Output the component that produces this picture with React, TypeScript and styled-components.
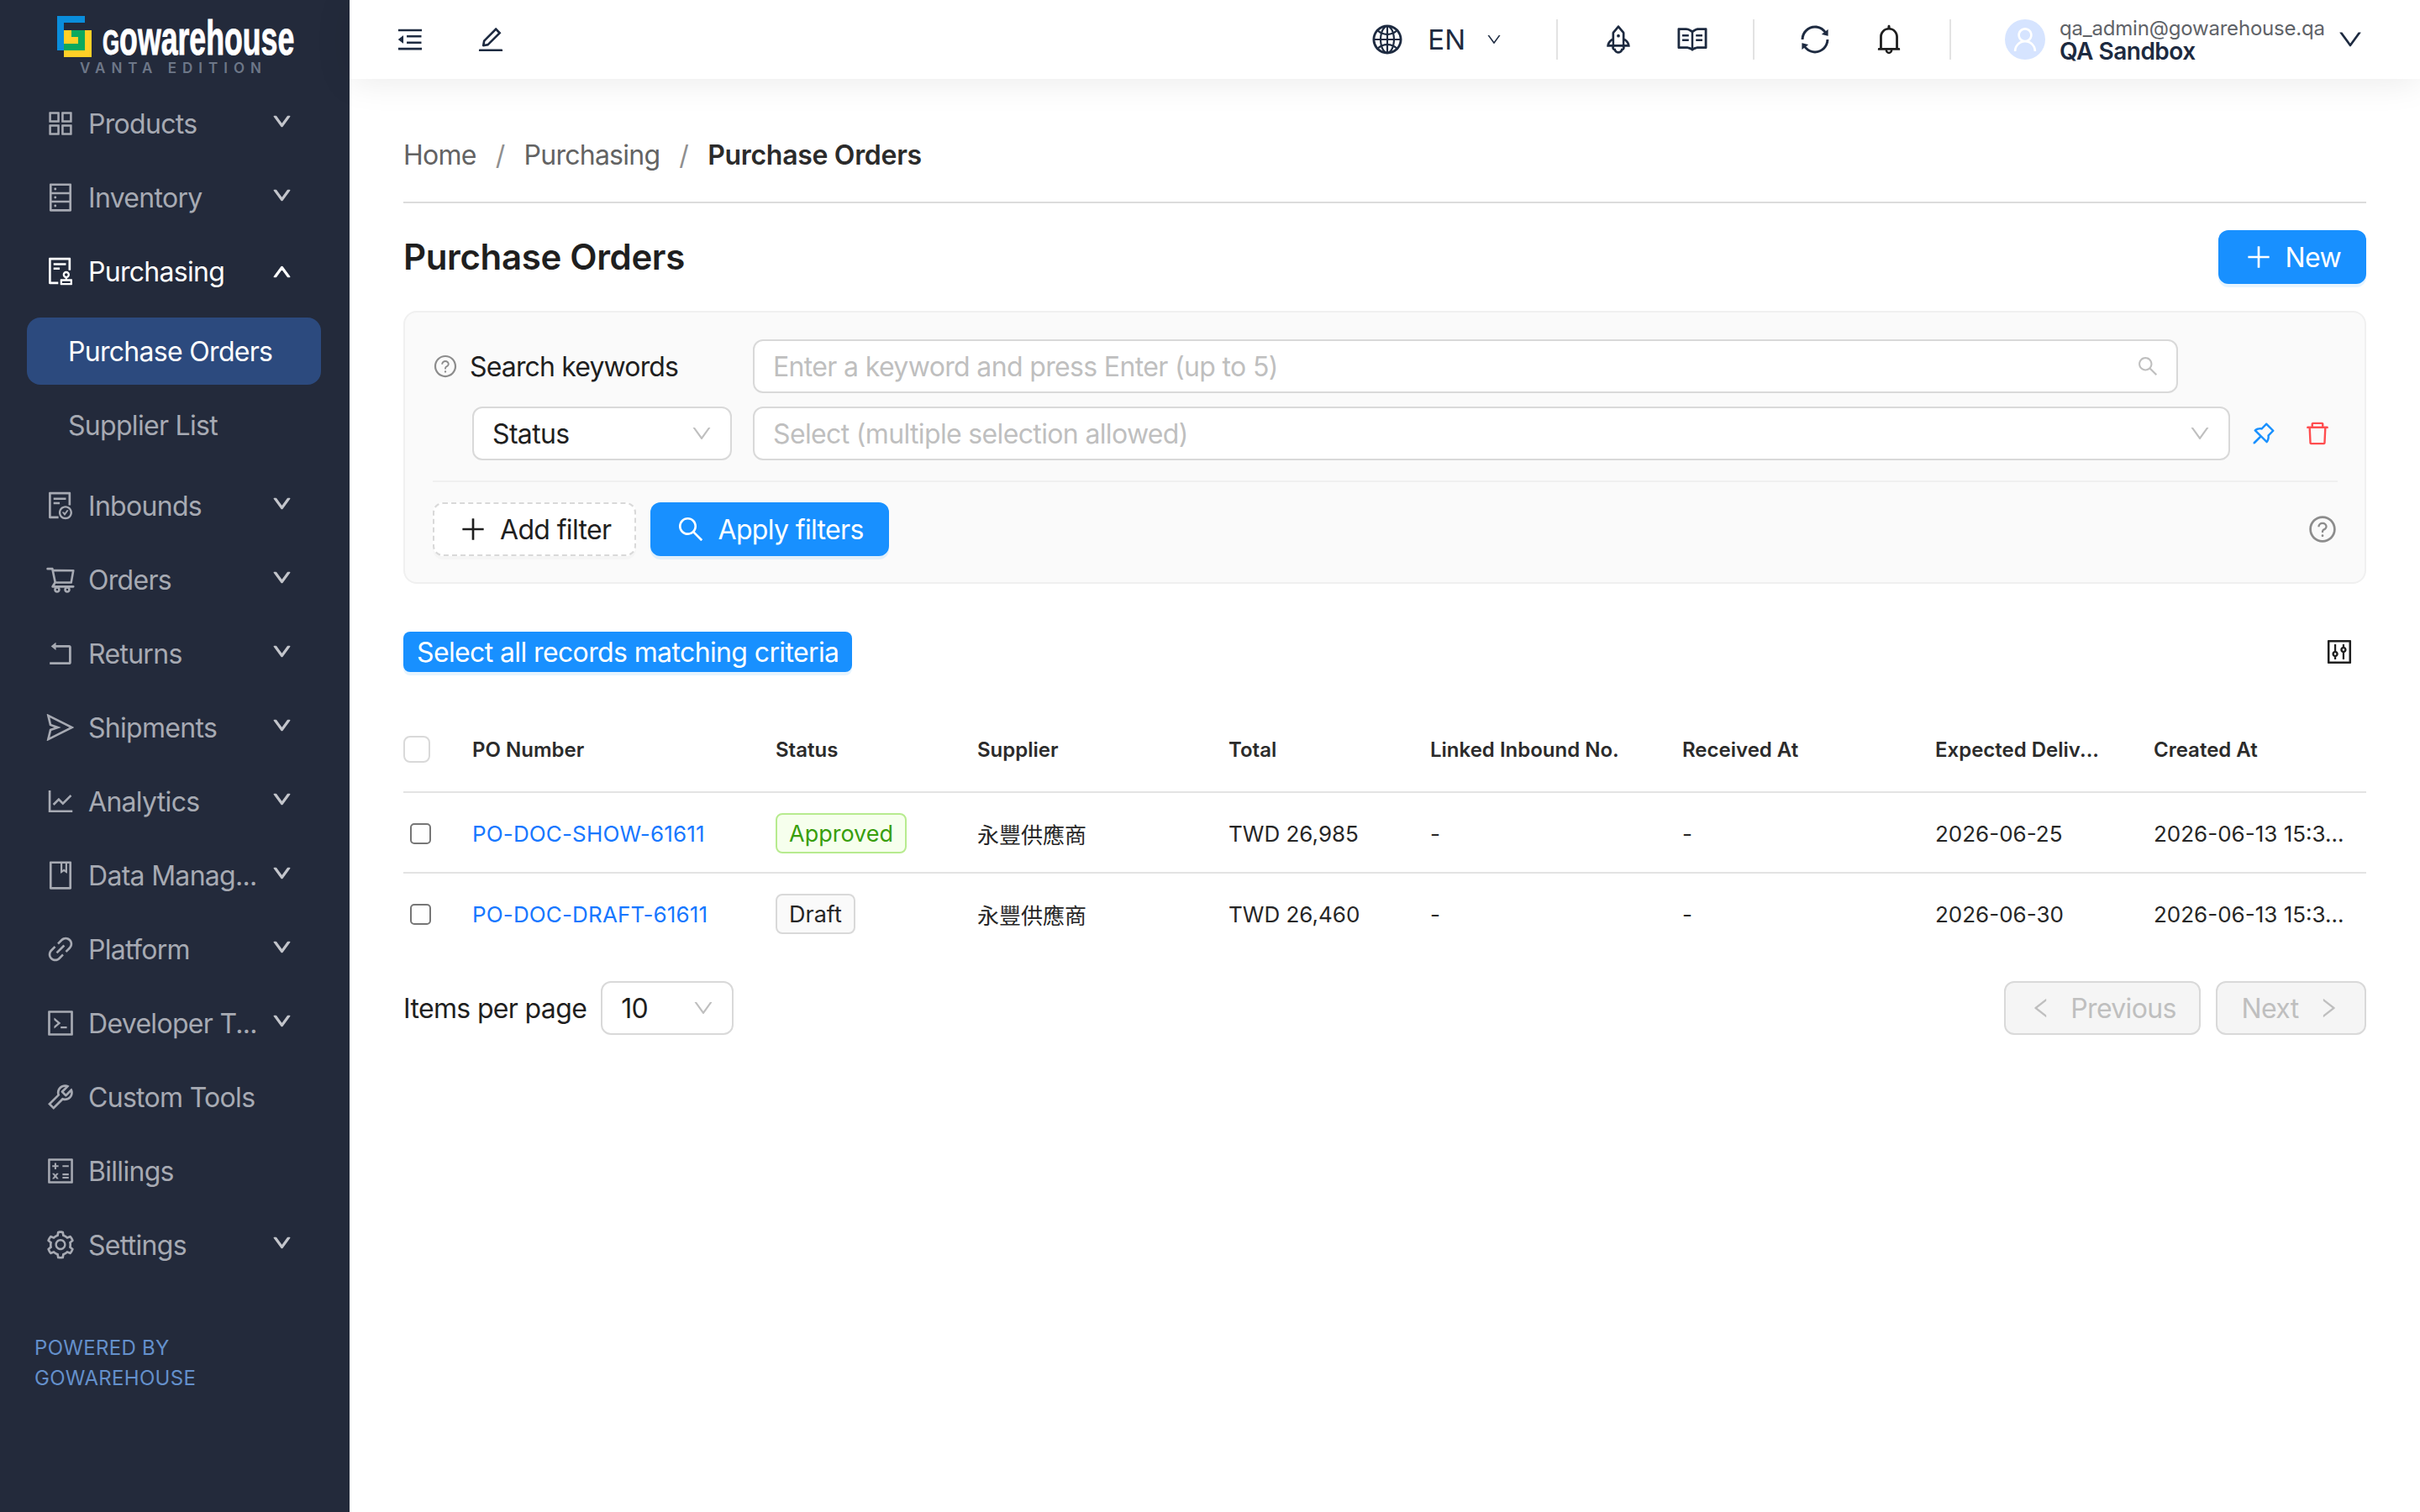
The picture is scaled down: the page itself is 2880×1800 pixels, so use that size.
import styled, { createGlobalStyle } from "styled-components"
import { ReactNode } from "react"
import {
  AiOutlineAppstore,
  AiOutlineDatabase,
  AiOutlineAudit,
  AiOutlineFileDone,
  AiOutlineShoppingCart,
  AiOutlineRollback,
  AiOutlineSend,
  AiOutlineLineChart,
  AiOutlineBook,
  AiOutlineLink,
  AiOutlineCode,
  AiOutlineTool,
  AiOutlineCalculator,
  AiOutlineSetting,
  AiOutlineDown,
  AiOutlineUp,
  AiOutlineMenuFold,
  AiOutlineEdit,
  AiOutlineGlobal,
  AiOutlineRocket,
  AiOutlineRead,
  AiOutlineSync,
  AiOutlineBell,
  AiOutlineUser,
  AiOutlinePlus,
  AiOutlineSearch,
  AiOutlinePushpin,
  AiOutlineDelete,
  AiOutlineQuestionCircle,
  AiOutlineControl,
  AiOutlineLeft,
  AiOutlineRight,
} from "react-icons/ai"

const GlobalStyle = createGlobalStyle`
  * {
    box-sizing: border-box;
  }
  body {
    margin: 0;
    background: #ffffff;
    font-family: Inter, "Noto Sans CJK TC", sans-serif;
  }
  svg {
    flex-shrink: 0;
  }
`

const Page = styled.div`
  display: flex;
  width: 2880px;
  height: 1800px;
  overflow: hidden;
`

const Sidebar = styled.aside`
  width: 416px;
  flex-shrink: 0;
  background: #232a3b;
  display: flex;
  flex-direction: column;
`

const LogoBlock = styled.div`
  height: 107px;
  padding: 19px 0 0 68px;
  display: flex;
  flex-direction: column;
  position: relative;
`

const LogoRow = styled.div`
  display: flex;
  align-items: flex-start;
  gap: 13px;
`

const LogoText = styled.span`
  display: block;
  width: 226px;
  font-family: "Liberation Sans", sans-serif;
  font-weight: 700;
  font-size: 58px;
  line-height: 50px;
  margin-top: 1px;
  color: #ffffff;
  -webkit-text-stroke: 1px #ffffff;
  transform-origin: left top;
  transform: scaleX(0.615);
  white-space: nowrap;
  &::first-letter {
    text-transform: uppercase;
    font-size: 42px;
  }
`

const LogoSub = styled.span`
  position: absolute;
  left: 95px;
  top: 72px;
  font-size: 17px;
  line-height: 18px;
  font-weight: 600;
  letter-spacing: 7px;
  color: #6d7788;
  white-space: nowrap;
`

const NavList = styled.nav`
  display: flex;
  flex-direction: column;
  gap: 8px;
`

const NavRow = styled.div<{ $active?: boolean }>`
  height: 80px;
  display: flex;
  align-items: center;
  padding: 0 71px 0 53px;
  color: ${p => (p.$active ? "#ffffff" : "#a7aab3")};
  font-size: 32px;
  letter-spacing: -0.7px;
`

const NavIcon = styled.span`
  width: 38px;
  height: 38px;
  display: flex;
  font-size: 38px;
  margin-right: 14px;
  flex-shrink: 0;
`

const NavLabel = styled.span`
  flex: 1;
  white-space: nowrap;
`

const NavCaret = styled.span<{ $up?: boolean }>`
  width: 20px;
  flex-shrink: 0;
  display: flex;
  justify-content: center;
  font-size: 25px;
  position: relative;
  top: ${p => (p.$up ? 0 : -3)}px;
  color: ${p => (p.$up ? "#ffffff" : "#c4c6cc")};
  svg {
    stroke: currentColor;
    stroke-width: 50;
  }
`

const SubList = styled.div`
  display: flex;
  flex-direction: column;
  gap: 8px;
  margin: 15px 0 16px;
`

const SubRow = styled.div<{ $active?: boolean }>`
  height: 80px;
  margin: 0 34px 0 32px;
  padding-left: 49px;
  display: flex;
  align-items: center;
  border-radius: 16px;
  background: ${p => (p.$active ? "#2c4a7e" : "transparent")};
  color: ${p => (p.$active ? "#ffffff" : "#a7aab3")};
  font-size: 32px;
  letter-spacing: -0.7px;
`

const Powered = styled.div`
  margin: 65px 0 0 41px;
  font-size: 24px;
  line-height: 36px;
  letter-spacing: 0.3px;
  color: #6490cb;
`

const Main = styled.main`
  flex: 1;
  min-width: 0;
  display: flex;
  flex-direction: column;
`

const TopBar = styled.header`
  height: 94px;
  flex-shrink: 0;
  display: flex;
  align-items: center;
  padding: 0 66px 0 54px;
  background: #ffffff;
  box-shadow: 0 2px 44px rgba(0, 0, 0, 0.09);
  position: relative;
  color: #1d2a40;
`

const TopIcon = styled.span<{ $size?: number; $left?: number; $right?: number; $color?: string }>`
  display: flex;
  font-size: ${p => p.$size ?? 36}px;
  margin-left: ${p => p.$left ?? 0}px;
  margin-right: ${p => p.$right ?? 0}px;
  color: ${p => p.$color ?? "inherit"};
`

const Spacer = styled.div`
  flex: 1;
`

const LangText = styled.span`
  font-size: 33px;
  margin: 0 24px 0 28px;
`

const TopDivider = styled.span`
  width: 2px;
  height: 48px;
  background: #e3e3e3;
`

const Avatar = styled.span`
  width: 48px;
  height: 48px;
  border-radius: 50%;
  background: #d6e4ff;
  color: #ffffff;
  display: flex;
  align-items: center;
  justify-content: center;
  font-size: 36px;
  margin: 0 17px 0 64px;
`

const UserBlock = styled.div`
  display: flex;
  flex-direction: column;
  width: 329px;
  padding-top: 2px;
`

const UserEmail = styled.span`
  font-size: 24px;
  line-height: 26px;
  letter-spacing: -0.2px;
  color: #5f6368;
`

const UserName = styled.span`
  font-size: 28px;
  line-height: 28px;
  font-weight: 600;
  letter-spacing: -0.5px;
  color: #1d2a40;
`

const Content = styled.div`
  padding: 0 64px;
  display: flex;
  flex-direction: column;
  letter-spacing: -0.65px;
`

const Breadcrumb = styled.div`
  height: 148px;
  padding-top: 66px;
  border-bottom: 2px solid #dcdcdc;
  display: flex;
  align-items: flex-start;
  font-size: 32px;
  line-height: 50px;
`

const Crumb = styled.span<{ $current?: boolean }>`
  color: ${p => (p.$current ? "#2b2b2b" : "#636363")};
  font-weight: ${p => (p.$current ? 600 : 400)};
  letter-spacing: ${p => (p.$current ? -0.3 : -0.75)}px;
`

const CrumbSep = styled.span`
  color: #8f8f8f;
  margin: 0 23px;
`

const TitleRow = styled.div`
  display: flex;
  align-items: center;
  justify-content: space-between;
  margin-top: 32px;
`

const Title = styled.h1`
  margin: 0;
  font-size: 42px;
  line-height: 64px;
  font-weight: 600;
  letter-spacing: -0.35px;
  color: #1f1f1f;
`

const Button = styled.button<{ $primary?: boolean; $dashed?: boolean }>`
  height: 64px;
  display: inline-flex;
  align-items: center;
  border-radius: 12px;
  font-family: inherit;
  font-size: 32px;
  letter-spacing: -0.65px;
  padding: 0 ${p => (p.$primary ? 30 : 28)}px;
  border: ${p => (p.$primary ? "none" : p.$dashed ? "2px dashed #d9d9d9" : "2px solid #d9d9d9")};
  background: ${p => (p.$primary ? "#1890ff" : "#ffffff")};
  color: ${p => (p.$primary ? "#ffffff" : "#1f1f1f")};
  box-shadow: ${p => (p.$primary ? "0 4px 0 rgba(5, 145, 255, 0.1)" : "0 4px 0 rgba(0, 0, 0, 0.02)")};
`

const ButtonIcon = styled.span`
  display: flex;
  font-size: 36px;
  margin-right: 14px;
`

const FilterPanel = styled.section`
  margin-top: 32px;
  height: 325px;
  background: #fafafa;
  border: 2px solid #f0f0f0;
  border-radius: 16px;
  padding: 32px 32px 0 33px;
  display: flex;
  flex-direction: column;
`

const FilterRow = styled.div`
  display: flex;
  align-items: center;
  height: 64px;
`

const SecondRow = styled(FilterRow)`
  margin-top: 16px;
  padding-left: 47px;
`

const Help = styled.span<{ $size: number }>`
  display: flex;
  color: #8c8c8c;
  font-size: ${p => p.$size}px;
`

const SearchLabel = styled.span`
  width: 351px;
  padding-left: 14px;
  font-size: 32px;
  letter-spacing: -0.85px;
  color: #1f1f1f;
`

const Field = styled.div<{ $w: number; $left?: number }>`
  width: ${p => p.$w}px;
  height: 64px;
  margin-left: ${p => p.$left ?? 0}px;
  background: #ffffff;
  border: 2px solid #d9d9d9;
  border-radius: 12px;
  padding: 0 20px 0 22px;
  display: flex;
  align-items: center;
  justify-content: space-between;
  font-size: 32px;
  flex-shrink: 0;
`

const FieldText = styled.span<{ $placeholder?: boolean }>`
  color: ${p => (p.$placeholder ? "#bfbfbf" : "#1f1f1f")};
`

const FieldIcon = styled.span`
  display: flex;
  font-size: 28px;
  color: #bfbfbf;
`

const RowAction = styled.span<{ $color: string; $left: number }>`
  display: flex;
  font-size: 34px;
  color: ${p => p.$color};
  margin-left: ${p => p.$left}px;
`

const PanelDivider = styled.div`
  height: 2px;
  background: #f0f0f0;
  margin-top: 24px;
`

const ActionsRow = styled.div`
  display: flex;
  align-items: center;
  gap: 17px;
  margin-top: 24px;
`

const SelectAll = styled.button`
  height: 48px;
  padding: 0 16px;
  border: none;
  border-radius: 8px;
  background: #1890ff;
  box-shadow: 0 4px 0 rgba(5, 145, 255, 0.1);
  color: #ffffff;
  font-family: inherit;
  font-size: 32px;
  letter-spacing: -0.62px;
`

const BulkRow = styled.div`
  margin-top: 57px;
  padding-right: 14px;
  display: flex;
  align-items: center;
  justify-content: space-between;
  color: #1f1f1f;
`

const COLUMNS = "82px 361px 240px 299px 240px 300px 301px 260px 253px"

const TableHead = styled.div`
  margin-top: 60px;
  height: 84px;
  padding-bottom: 18px;
  display: grid;
  grid-template-columns: ${COLUMNS};
  align-items: center;
  border-bottom: 2px solid #e3e3e3;
  font-size: 24px;
  font-weight: 600;
  letter-spacing: 0;
  color: #2b2b2b;
`

const TableRow = styled.div<{ $last?: boolean }>`
  height: 96px;
  padding-top: ${p => (p.$last ? 0 : 2)}px;
  display: grid;
  grid-template-columns: ${COLUMNS};
  align-items: center;
  border-bottom: ${p => (p.$last ? "none" : "2px solid #e3e3e3")};
  font-size: 26px;
  letter-spacing: 0;
  color: #262626;
`

const HeadBox = styled.span`
  width: 32px;
  height: 32px;
  border-radius: 8px;
  border: 2px solid #d9d9d9;
  background: #ffffff;
`

const RowBox = styled.span`
  width: 25px;
  height: 25px;
  margin-left: 8px;
  border-radius: 5px;
  border: 2px solid #767676;
  background: #ffffff;
`

const PoLink = styled.a`
  color: #1677ff;
  letter-spacing: 0.15px;
  text-decoration: none;
`

const Tag = styled.span<{ $kind: "green" | "gray" }>`
  justify-self: start;
  height: 48px;
  padding: 0 14px;
  display: inline-flex;
  align-items: center;
  border-radius: 8px;
  font-size: 27px;
  border: 2px solid ${p => (p.$kind === "green" ? "#b7eb8f" : "#d9d9d9")};
  background: ${p => (p.$kind === "green" ? "#f6ffed" : "#fafafa")};
  color: ${p => (p.$kind === "green" ? "#389e0d" : "#262626")};
`

const Pager = styled.div`
  margin-top: 32px;
  display: flex;
  align-items: center;
  justify-content: space-between;
`

const PagerSide = styled.div<{ $gap: number }>`
  display: flex;
  align-items: center;
  gap: ${p => p.$gap}px;
  font-size: 32px;
  color: #1f1f1f;
`

const PagerButton = styled.button<{ $w: number }>`
  width: ${p => p.$w}px;
  height: 64px;
  display: flex;
  align-items: center;
  justify-content: center;
  gap: 20px;
  background: #f5f5f5;
  border: 2px solid #d9d9d9;
  border-radius: 12px;
  color: #bfbfbf;
  font-family: inherit;
  font-size: 32px;
  letter-spacing: -0.65px;
  padding: 0;
  svg {
    font-size: 30px;
  }
`

type NavItem = { label: string; icon: ReactNode; caret?: boolean }

const topItems: NavItem[] = [
  { label: "Products", icon: <AiOutlineAppstore />, caret: true },
  { label: "Inventory", icon: <AiOutlineDatabase />, caret: true },
]

const bottomItems: NavItem[] = [
  { label: "Inbounds", icon: <AiOutlineFileDone />, caret: true },
  { label: "Orders", icon: <AiOutlineShoppingCart />, caret: true },
  { label: "Returns", icon: <AiOutlineRollback />, caret: true },
  { label: "Shipments", icon: <AiOutlineSend />, caret: true },
  { label: "Analytics", icon: <AiOutlineLineChart />, caret: true },
  { label: "Data Manag...", icon: <AiOutlineBook />, caret: true },
  { label: "Platform", icon: <AiOutlineLink />, caret: true },
  { label: "Developer T...", icon: <AiOutlineCode />, caret: true },
  { label: "Custom Tools", icon: <AiOutlineTool /> },
  { label: "Billings", icon: <AiOutlineCalculator /> },
  { label: "Settings", icon: <AiOutlineSetting />, caret: true },
]

const rows = [
  {
    po: "PO-DOC-SHOW-61611",
    status: "Approved",
    kind: "green" as const,
    total: "TWD 26,985",
    expected: "2026-06-25",
  },
  {
    po: "PO-DOC-DRAFT-61611",
    status: "Draft",
    kind: "gray" as const,
    total: "TWD 26,460",
    expected: "2026-06-30",
  },
]

const LogoMark = () => (
  <svg width="41" height="50" viewBox="0 0 41 50">
    <path d="M0 0H33V8H8V41H0Z" fill="#0a8ddb" />
    <rect x="8" y="17" width="33" height="32" fill="#ffd027" />
    <path d="M17 17H33V41H8V33H25V25H17Z" fill="#0aa95e" />
  </svg>
)

const SideNavRow = ({ item }: { item: NavItem }) => (
  <NavRow>
    <NavIcon>{item.icon}</NavIcon>
    <NavLabel>{item.label}</NavLabel>
    {item.caret ? <NavCaret><AiOutlineDown /></NavCaret> : null}
  </NavRow>
)

const App = () => {
  return (
    <Page>
      <GlobalStyle />
      <Sidebar>
        <LogoBlock>
          <LogoRow>
            <LogoMark />
            <LogoText>gowarehouse</LogoText>
          </LogoRow>
          <LogoSub>VANTA EDITION</LogoSub>
        </LogoBlock>
        <NavList>
          {topItems.map(item => <SideNavRow key={item.label} item={item} />)}
          <NavRow $active>
            <NavIcon><AiOutlineAudit /></NavIcon>
            <NavLabel>Purchasing</NavLabel>
            <NavCaret $up><AiOutlineUp /></NavCaret>
          </NavRow>
        </NavList>
        <SubList>
          <SubRow $active>Purchase Orders</SubRow>
          <SubRow>Supplier List</SubRow>
        </SubList>
        <NavList>
          {bottomItems.map(item => <SideNavRow key={item.label} item={item} />)}
        </NavList>
        <Powered>POWERED BY<br />GOWAREHOUSE</Powered>
      </Sidebar>
      <Main>
        <TopBar>
          <TopIcon $right={60}><AiOutlineMenuFold /></TopIcon>
          <TopIcon><AiOutlineEdit /></TopIcon>
          <Spacer />
          <TopIcon $size={40}><AiOutlineGlobal /></TopIcon>
          <LangText>EN</LangText>
          <TopIcon $size={20} $right={64}><AiOutlineDown /></TopIcon>
          <TopDivider />
          <TopIcon $size={40} $left={52} $right={48}><AiOutlineRocket /></TopIcon>
          <TopIcon $size={40} $right={52}><AiOutlineRead /></TopIcon>
          <TopDivider />
          <TopIcon $size={40} $left={52} $right={48}><AiOutlineSync /></TopIcon>
          <TopIcon $size={40} $right={52} $color="#1f1f1f"><AiOutlineBell /></TopIcon>
          <TopDivider />
          <Avatar><AiOutlineUser /></Avatar>
          <UserBlock>
            <UserEmail>qa_admin@gowarehouse.qa</UserEmail>
            <UserName>QA Sandbox</UserName>
          </UserBlock>
          <TopIcon $size={34}><AiOutlineDown /></TopIcon>
        </TopBar>
        <Content>
          <Breadcrumb>
            <Crumb>Home</Crumb>
            <CrumbSep>/</CrumbSep>
            <Crumb>Purchasing</Crumb>
            <CrumbSep>/</CrumbSep>
            <Crumb $current>Purchase Orders</Crumb>
          </Breadcrumb>
          <TitleRow>
            <Title>Purchase Orders</Title>
            <Button $primary><ButtonIcon><AiOutlinePlus /></ButtonIcon>New</Button>
          </TitleRow>
          <FilterPanel>
            <FilterRow>
              <Help $size={30}><AiOutlineQuestionCircle /></Help>
              <SearchLabel>Search keywords</SearchLabel>
              <Field $w={1696}>
                <FieldText $placeholder>Enter a keyword and press Enter (up to 5)</FieldText>
                <FieldIcon><AiOutlineSearch /></FieldIcon>
              </Field>
            </FilterRow>
            <SecondRow>
              <Field $w={309}>
                <FieldText>Status</FieldText>
                <FieldIcon><AiOutlineDown /></FieldIcon>
              </Field>
              <Field $w={1758} $left={25}>
                <FieldText $placeholder>Select (multiple selection allowed)</FieldText>
                <FieldIcon><AiOutlineDown /></FieldIcon>
              </Field>
              <RowAction $color="#1890ff" $left={23}><AiOutlinePushpin /></RowAction>
              <RowAction $color="#ff4d4f" $left={30}><AiOutlineDelete /></RowAction>
            </SecondRow>
            <PanelDivider />
            <ActionsRow>
              <Button $dashed><ButtonIcon><AiOutlinePlus /></ButtonIcon>Add filter</Button>
              <Button $primary><ButtonIcon><AiOutlineSearch /></ButtonIcon>Apply filters</Button>
              <Spacer />
              <Help $size={36}><AiOutlineQuestionCircle /></Help>
            </ActionsRow>
          </FilterPanel>
          <BulkRow>
            <SelectAll>Select all records matching criteria</SelectAll>
            <TopIcon $size={36}><AiOutlineControl /></TopIcon>
          </BulkRow>
          <TableHead>
            <HeadBox />
            <span>PO Number</span>
            <span>Status</span>
            <span>Supplier</span>
            <span>Total</span>
            <span>Linked Inbound No.</span>
            <span>Received At</span>
            <span>Expected Deliv...</span>
            <span>Created At</span>
          </TableHead>
          {rows.map((row, i) => (
            <TableRow key={row.po} $last={i === rows.length - 1}>
              <RowBox />
              <PoLink>{row.po}</PoLink>
              <Tag $kind={row.kind}>{row.status}</Tag>
              <span>永豐供應商</span>
              <span>{row.total}</span>
              <span>-</span>
              <span>-</span>
              <span>{row.expected}</span>
              <span>2026-06-13 15:3...</span>
            </TableRow>
          ))}
          <Pager>
            <PagerSide $gap={17}>
              Items per page
              <Field $w={158}>
                <FieldText>10</FieldText>
                <FieldIcon><AiOutlineDown /></FieldIcon>
              </Field>
            </PagerSide>
            <PagerSide $gap={18}>
              <PagerButton $w={234}><AiOutlineLeft />Previous</PagerButton>
              <PagerButton $w={179}>Next<AiOutlineRight /></PagerButton>
            </PagerSide>
          </Pager>
        </Content>
      </Main>
    </Page>
  )
}

export default App
